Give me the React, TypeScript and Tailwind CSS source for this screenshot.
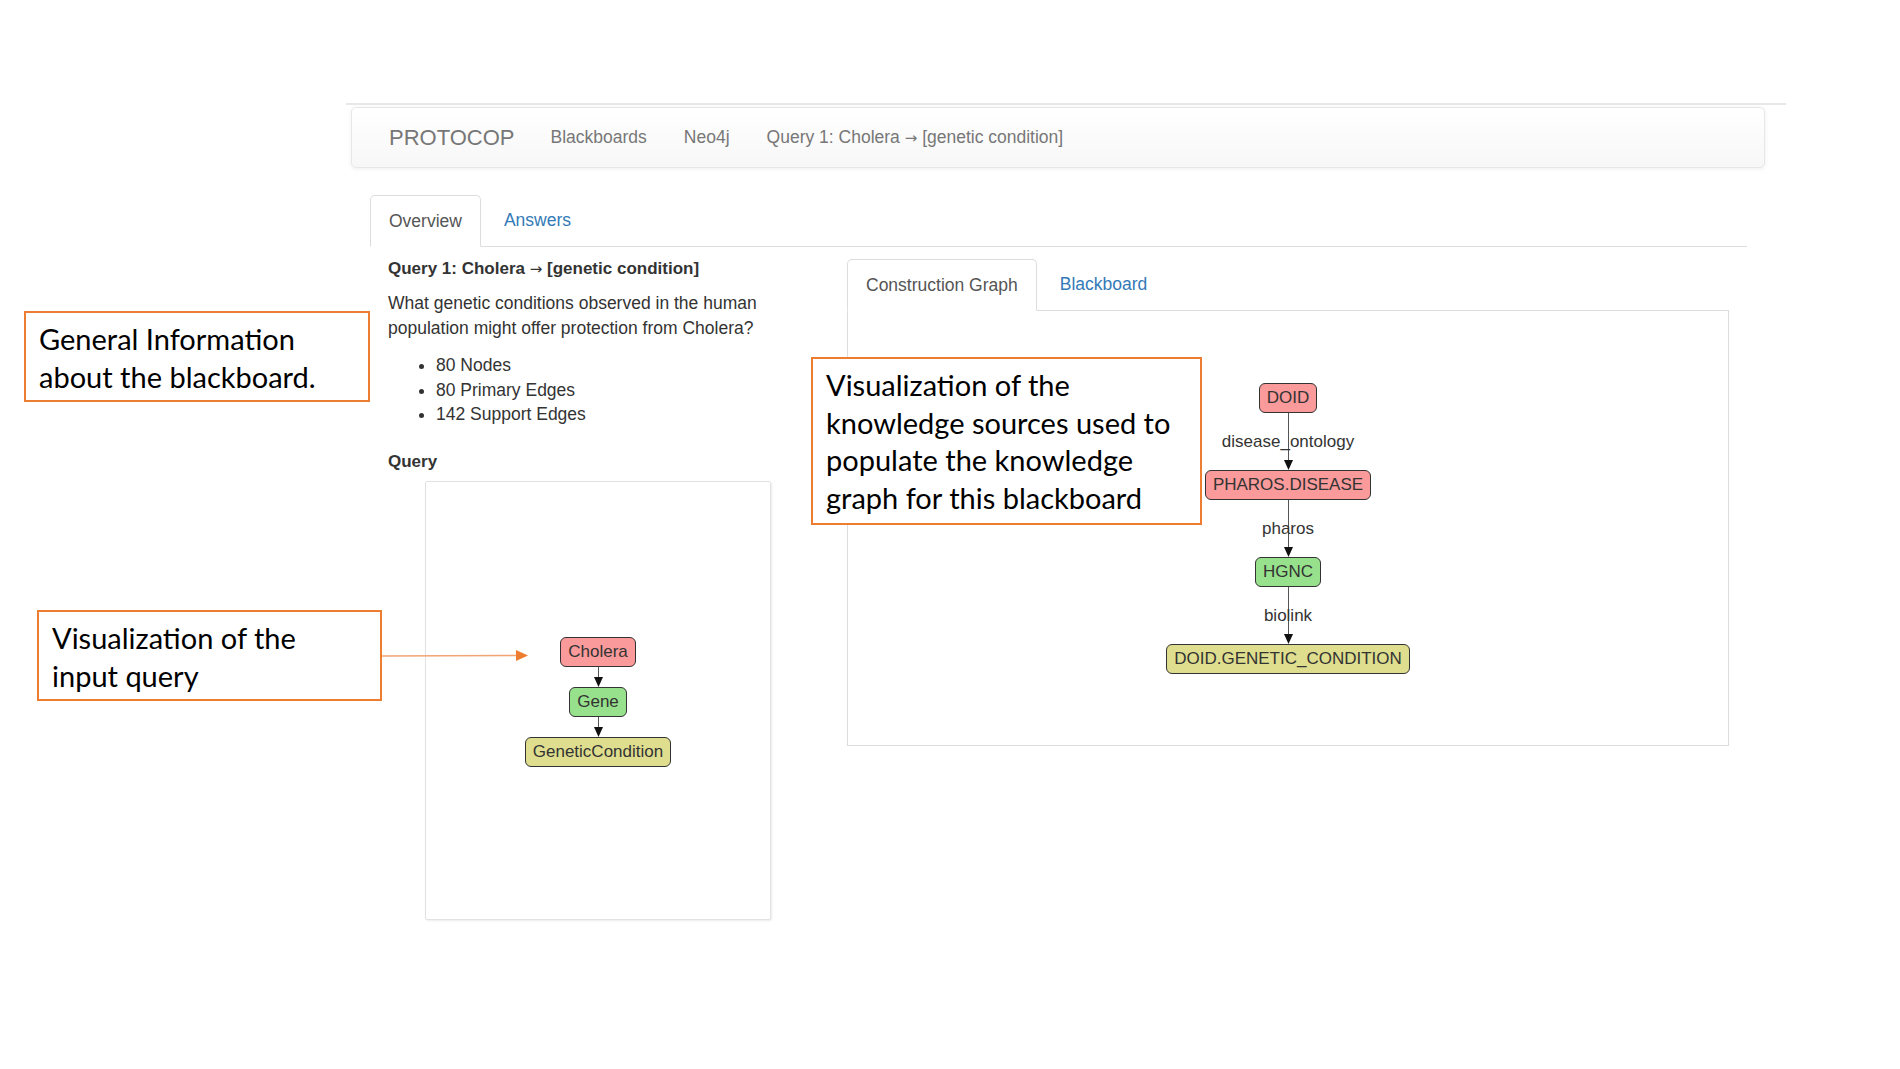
import React from 'react';

const sans = { fontFamily: '"Liberation Sans", Arial, Helvetica, sans-serif' };
const callout = { fontFamily: 'Lato, "Open Sans", sans-serif' };
const arrowFont = { fontFamily: '"DejaVu Sans", sans-serif' };

type Tone = 'red' | 'green' | 'yellow';

const toneClass: Record<Tone, string> = {
  red: 'bg-[#fa9a9a]',
  green: 'bg-[#97e08c]',
  yellow: 'bg-[#dede8e]',
};

function Arrow() {
  return (
    <span className="text-[15px] font-normal" style={arrowFont}>
      →
    </span>
  );
}

function Node({ label, tone }: { label: string; tone: Tone }) {
  return (
    <div
      className={`h-[30px] shrink-0 whitespace-nowrap rounded-[6px] border border-[#333] px-[7px] text-[17px] leading-[28px] text-[#333] ${toneClass[tone]}`}
    >
      {label}
    </div>
  );
}

function ArrowHead() {
  return (
    <svg width="9" height="10" viewBox="0 0 9 10" className="block shrink-0">
      <path d="M0 0 L9 0 L4.5 10 Z" fill="#111" />
    </svg>
  );
}

function ShortEdge() {
  return (
    <div className="flex h-[20px] flex-col items-center">
      <div className="h-[10px] w-px bg-[#555]" />
      <ArrowHead />
    </div>
  );
}

function LabelEdge({ label }: { label: string }) {
  return (
    <div className="relative flex h-[57px] flex-col items-center">
      <div className="h-[47px] w-px bg-[#555]" />
      <ArrowHead />
      <span className="absolute left-1/2 top-[18px] -translate-x-1/2 whitespace-nowrap text-[17px] leading-[22px] text-[#333]">
        {label}
      </span>
    </div>
  );
}

function Tab({ label, active }: { label: string; active?: boolean }) {
  return active ? (
    <div className="-mb-px h-[52px] rounded-t-[5px] border border-[#ddd] border-b-white bg-white px-[18px] text-[17.5px] leading-[50px] text-[#555]">
      {label}
    </div>
  ) : (
    <div className="ml-[4px] h-[51px] px-[19px] text-[17.5px] leading-[50px] text-[#337ab7]">{label}</div>
  );
}

function Callout({ className, lines }: { className: string; lines: string[] }) {
  return (
    <div
      className={`absolute border-2 border-[#ed7d31] bg-white pl-[13px] pt-[7px] text-[29px] leading-[37.5px] text-black ${className}`}
      style={callout}
    >
      {lines.map((l) => (
        <div key={l} className="whitespace-nowrap">
          {l}
        </div>
      ))}
    </div>
  );
}

export default function App() {
  return (
    <div className="relative h-[1069px] w-[1900px] overflow-hidden bg-white text-[#333]" style={sans}>
      <div className="ml-[346px] pt-[103px]">
        <div className="h-[2px] w-[1440px] bg-[#e8e8e8]" />

        <nav className="ml-[5px] mt-[2px] flex h-[61px] w-[1414px] items-center rounded-[5px] border border-[#e7e7e7] bg-linear-to-b from-[#ffffff] to-[#f7f7f7] pl-[37px] text-[#777] shadow-[0_1px_4px_rgba(0,0,0,0.07)]">
          <span className="pr-[18px] text-[22px]">PROTOCOP</span>
          <span className="px-[18px] text-[17.5px]">Blackboards</span>
          <span className="px-[19px] text-[17.5px]">Neo4j</span>
          <span className="px-[18px] text-[17.5px]">
            Query 1: Cholera <Arrow /> [genetic condition]
          </span>
        </nav>

        <div className="ml-[24px] mt-[27px] w-[1377px]">
          <div className="flex border-b border-[#ddd]">
            <Tab label="Overview" active />
            <Tab label="Answers" />
          </div>

          <div className="flex">
            <div className="w-[459px] shrink-0 px-[18px]">
              <div className="mt-[10px] text-[17px] font-bold leading-[24px]">
                Query 1: Cholera <Arrow /> [genetic condition]
              </div>
              <p className="mt-[10px] text-[17.5px] leading-[25px]">
                What genetic conditions observed in the human
                <br />
                population might offer protection from Cholera?
              </p>
              <ul className="mt-[12px] list-disc pl-[48px] text-[17.5px] leading-[24.5px]">
                <li>80 Nodes</li>
                <li>80 Primary Edges</li>
                <li>142 Support Edges</li>
              </ul>
              <div className="mt-[23px] text-[17px] font-bold leading-[24px]">Query</div>
              <div className="ml-[37px] mt-[7px] flex h-[439px] w-[346px] flex-col items-center justify-center rounded-[2px] border border-[#e2e2e2] pt-[3px] shadow-[1px_1px_2px_rgba(0,0,0,0.08)]">
                <Node label="Cholera" tone="red" />
                <ShortEdge />
                <Node label="Gene" tone="green" />
                <ShortEdge />
                <Node label="GeneticCondition" tone="yellow" />
              </div>
            </div>

            <div className="w-[918px] shrink-0 px-[18px] pt-[12px]">
              <div className="flex border-b border-[#ddd]">
                <Tab label="Construction Graph" active />
                <Tab label="Blackboard" />
              </div>
              <div className="flex h-[435px] flex-col items-center border border-t-0 border-[#ddd] pt-[72px]">
                <Node label="DOID" tone="red" />
                <LabelEdge label="disease_ontology" />
                <Node label="PHAROS.DISEASE" tone="red" />
                <LabelEdge label="pharos" />
                <Node label="HGNC" tone="green" />
                <LabelEdge label="biolink" />
                <Node label="DOID.GENETIC_CONDITION" tone="yellow" />
              </div>
            </div>
          </div>
        </div>
      </div>

      <Callout className="left-[24px] top-[311px] h-[91px] w-[346px]" lines={['General Information', 'about the blackboard.']} />
      <Callout className="left-[37px] top-[610px] h-[91px] w-[345px]" lines={['Visualization of the', 'input query']} />
      <Callout
        className="left-[811px] top-[357px] h-[168px] w-[391px]"
        lines={['Visualization of the', 'knowledge sources used to', 'populate the knowledge', 'graph for this blackboard']}
      />

      <svg className="absolute left-[382px] top-[648px]" width="150" height="16" viewBox="0 0 150 16">
        <line x1="0" y1="8" x2="136" y2="7.5" stroke="#f2a474" strokeWidth="1.6" />
        <path d="M134 2 L146 7.5 L134 13 Z" fill="#ed7d31" />
      </svg>
    </div>
  );
}
